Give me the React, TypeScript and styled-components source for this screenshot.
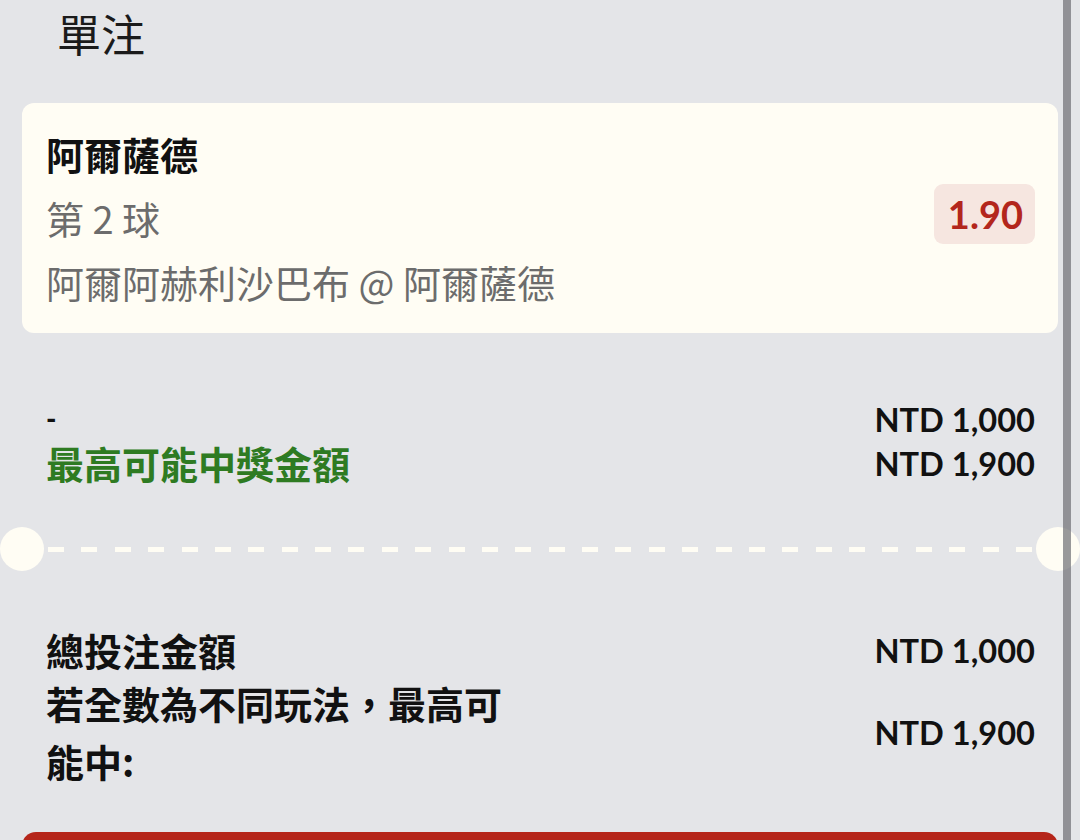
import React from "react";
import styled, { createGlobalStyle } from "styled-components";

const GlobalStyle = createGlobalStyle`
  html, body {
    margin: 0;
    padding: 0;
    overflow: hidden;
    background: #e4e5e8;
  }
  body {
    font-family: "Noto Sans CJK TC", "Noto Sans", sans-serif;
    color: #111;
  }
  * { box-sizing: border-box; }
`;

const Page = styled.div`
  position: relative;
  width: 1080px;
  height: 840px;
  overflow: hidden;
  padding: 0 22px;
  background: #e4e5e8;
`;

const Header = styled.h1`
  margin: 0;
  height: 76px;
  line-height: 66px;
  padding-left: 35px;
  font-size: 44px;
  font-weight: 400;
  color: #1b1b1b;
`;

const Card = styled.div`
  margin-top: 27px;
  display: flex;
  align-items: center;
  justify-content: space-between;
  padding: 19px 23px 19px 24px;
  background: #fffdf4;
  border-radius: 12px;
`;

const Info = styled.div`
  display: flex;
  flex-direction: column;
`;

const Line = styled.div<{ $bold?: boolean }>`
  line-height: 64px;
  font-size: 38px;
  font-weight: ${(p) => (p.$bold ? 700 : 400)};
  color: ${(p) => (p.$bold ? "#111" : "#6c6c6c")};
  white-space: nowrap;
`;

const OddsBadge = styled.div`
  margin-bottom: 8px;
  padding: 0 12px 0 14px;
  height: 60px;
  display: flex;
  align-items: center;
  background: #f6e6e0;
  border-radius: 9px;
  font-family: "Lato", sans-serif;
  font-weight: 700;
  font-size: 38px;
  color: #b3261c;
`;

const Section = styled.div<{ $top: number }>`
  margin-top: ${(p) => p.$top}px;
  padding: 0 23px 0 24px;
  display: flex;
  flex-direction: column;
`;

const Row = styled.div<{ $h: number }>`
  display: flex;
  align-items: center;
  justify-content: space-between;
  min-height: ${(p) => p.$h}px;
`;

const Dash = styled.span`
  margin-top: -2px;
  font-family: "Lato", sans-serif;
  font-weight: 900;
  font-size: 28px;
  line-height: 28px;
`;

const Label = styled.div<{ $green?: boolean; $lh: number }>`
  font-size: 38px;
  font-weight: 700;
  line-height: ${(p) => p.$lh}px;
  color: ${(p) => (p.$green ? "#2e7b22" : "#111")};
  max-width: 480px;
`;

const Amount = styled.div`
  font-family: "Lato", sans-serif;
  font-weight: 700;
  font-size: 32.6px;
  color: #111;
  white-space: nowrap;
`;

const Divider = styled.div`
  margin: 42px -22px 0;
  height: 44px;
  display: flex;
  align-items: center;
`;

const Notch = styled.div`
  flex: 0 0 44px;
  height: 44px;
  border-radius: 50%;
  background: #fffdf4;
`;

const DashLine = styled.div`
  flex: 1;
  margin: 0 4px;
  display: flex;
  justify-content: space-between;
  align-items: center;
`;

const DashSeg = styled.span`
  width: 16px;
  height: 5px;
  background: #fffdf4;
`;

const SubmitButton = styled.button`
  display: block;
  margin-top: 42px;
  width: 100%;
  height: 70px;
  border: none;
  border-radius: 14px;
  background: #b5251a;
`;

const Scrollbar = styled.div`
  position: absolute;
  top: 0;
  right: 9px;
  width: 8px;
  height: 840px;
  background: rgba(110, 110, 116, 0.7);
`;

export default function App() {
  return (
    <>
      <GlobalStyle />
      <Page>
        <Header>單注</Header>
        <Card>
          <Info>
            <Line $bold>阿爾薩德</Line>
            <Line>第 2 球</Line>
            <Line>阿爾阿赫利沙巴布 @ 阿爾薩德</Line>
          </Info>
          <OddsBadge>1.90</OddsBadge>
        </Card>

        <Section $top={64}>
          <Row $h={44}>
            <Dash>-</Dash>
            <Amount>NTD 1,000</Amount>
          </Row>
          <Row $h={44}>
            <Label $green $lh={44}>最高可能中獎金額</Label>
            <Amount>NTD 1,900</Amount>
          </Row>
        </Section>

        <Divider>
          <Notch />
          <DashLine>
            {Array.from({ length: 30 }).map((_, i) => (
              <DashSeg key={i} />
            ))}
          </DashLine>
          <Notch />
        </Divider>

        <Section $top={55}>
          <Row $h={48}>
            <Label $lh={48}>總投注金額</Label>
            <Amount>NTD 1,000</Amount>
          </Row>
          <Row $h={116}>
            <Label $lh={58}>若全數為不同玩法，最高可能中:</Label>
            <Amount>NTD 1,900</Amount>
          </Row>
        </Section>

        <SubmitButton aria-label="投注" />
        <Scrollbar />
      </Page>
    </>
  );
}
